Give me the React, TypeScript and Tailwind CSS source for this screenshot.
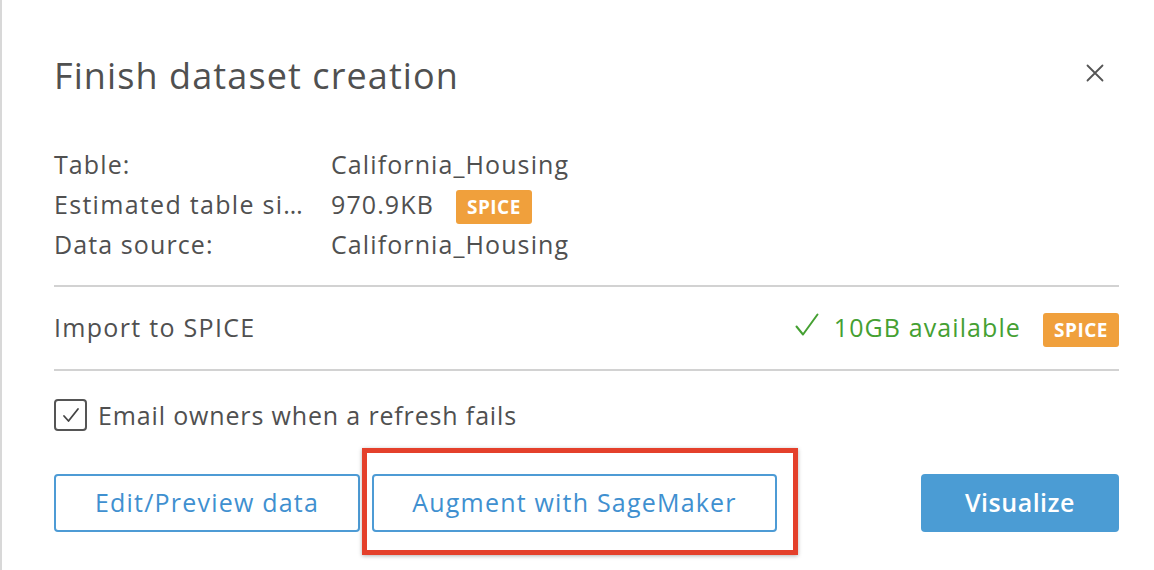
import React from "react";

function CloseIcon() {
  return (
    <svg width="18" height="18" viewBox="0 0 18 18" fill="none">
      <path d="M1.5 1.5 L16.5 16.5 M16.5 1.5 L1.5 16.5" stroke="#555555" strokeWidth="1.8" strokeLinecap="round" />
    </svg>
  );
}

function Badge() {
  return (
    <span className="inline-flex items-center justify-center w-[76px] h-[34px] rounded-[3px] bg-[#f0a03c] text-white text-[19px] font-bold tracking-[0.5px]">
      SPICE
    </span>
  );
}

export default function App() {
  return (
    <div className="w-[1154px] h-[570px] bg-white border-l-2 border-[#d8d8d8] pl-[52px] pr-[35px] font-['Open_Sans',sans-serif] text-[#505050] overflow-hidden">
      <div className="flex justify-between items-start pt-[54px]">
        <h1 className="text-[36px] leading-[44px] tracking-[1.1px]">Finish dataset creation</h1>
        <div className="mt-[10px] mr-[15px]">
          <CloseIcon />
        </div>
      </div>

      <div className="mt-[46px] text-[25px] leading-[40px] tracking-[1.1px]">
        <div className="flex">
          <div className="w-[277px]">Table:</div>
          <div>California_Housing</div>
        </div>
        <div className="flex items-center">
          <div className="w-[277px] tracking-[1.3px]">Estimated table si…</div>
          <div>970.9KB</div>
          <div className="ml-[22px]">
            <Badge />
          </div>
        </div>
        <div className="flex">
          <div className="w-[277px]">Data source:</div>
          <div>California_Housing</div>
        </div>
      </div>

      <div className="mt-[21px] h-[2px] bg-[#d2d2d2]" />

      <div className="h-[82px] flex items-center justify-between text-[25px] tracking-[1.1px]">
        <div className="tracking-[1.3px]">Import to SPICE</div>
        <div className="flex items-center">
          <svg width="24" height="24" viewBox="0 0 24 24" fill="none" className="mb-[6px]">
            <path d="M1.5 13.5 L8 21.5 L22.5 1.5" stroke="#45a032" strokeWidth="2" strokeLinecap="round" strokeLinejoin="round" />
          </svg>
          <span className="ml-[15px] text-[#45a032]">10GB available</span>
          <div className="ml-[22px]">
            <Badge />
          </div>
        </div>
      </div>

      <div className="h-[2px] bg-[#d2d2d2]" />

      <div className="mt-[28px] flex items-center">
        <div className="w-[33px] h-[32px] rounded-[4px] border-2 border-[#555555] flex items-center justify-center">
          <svg width="18" height="16" viewBox="0 0 18 16" fill="none">
            <path d="M2 9 L6.5 14 L16 2" stroke="#444444" strokeWidth="1.8" strokeLinecap="round" strokeLinejoin="round" />
          </svg>
        </div>
        <span className="ml-[11px] text-[25px] leading-[32px] tracking-[0.85px]">Email owners when a refresh fails</span>
      </div>

      <div className="mt-[43px] flex items-center text-[25px] font-medium tracking-[1.2px]">
        <button className="w-[306px] h-[58px] rounded-[4px] border-2 border-[#4d9bd5] text-[#3f90d0] bg-white">
          Edit/Preview data
        </button>
        <div className="relative ml-[12px]">
          <button className="w-[405px] h-[58px] rounded-[4px] border-2 border-[#4d9bd5] text-[#3f90d0] bg-white">
            Augment with SageMaker
          </button>
          <div className="absolute left-[-10px] top-[-26px] right-[-21px] bottom-[-23px] border-[5px] border-[#e4402b] shadow-[0_1px_4px_rgba(0,0,0,0.3)] pointer-events-none" />
        </div>
        <button className="ml-auto w-[198px] h-[58px] rounded-[4px] bg-[#4b9cd4] text-white font-semibold tracking-[0.5px]">
          Visualize
        </button>
      </div>
    </div>
  );
}
